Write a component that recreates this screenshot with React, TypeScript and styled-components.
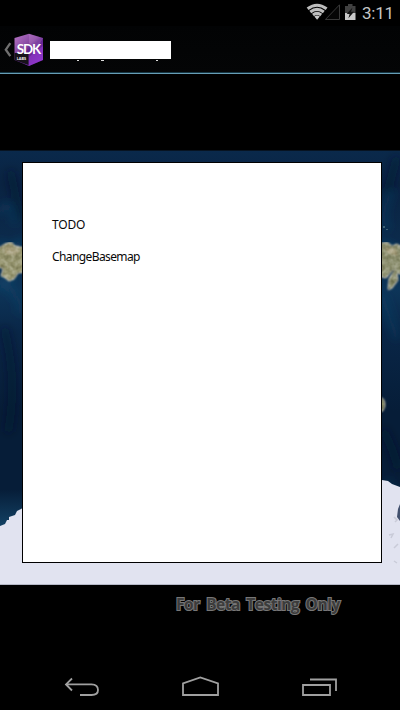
import React from "react";
import styled, { createGlobalStyle } from "styled-components";

const GlobalStyle = createGlobalStyle`
  * { box-sizing: border-box; }
  body { margin: 0; background: #000; overflow: hidden; }
`;

const Screen = styled.div`
  width: 400px;
  height: 710px;
  display: flex;
  flex-direction: column;
  background: #000;
  overflow: hidden;
  font-family: Roboto, sans-serif;
`;

const StatusBar = styled.header`
  height: 26px;
  flex: none;
  display: flex;
  align-items: flex-start;
  justify-content: flex-end;
  padding-right: 7px;
`;

const StatusIcons = styled.svg`
  display: block;
  width: 54px;
  height: 26px;
  margin-right: 3px;
`;

const Clock = styled.time`
  width: 31px;
  padding-top: 3px;
  font-size: 17px;
  line-height: 21px;
  letter-spacing: -0.25px;
  white-space: nowrap;
  color: #c6c6c6;
`;

const ActionBar = styled.div`
  height: 48px;
  flex: none;
  display: flex;
  background: linear-gradient(#020304, #040506);
  box-shadow: inset 0 -1px #679db5, inset 0 -2px #153644;
`;

const BrandIcon = styled.svg`
  display: block;
  width: 46px;
  height: 46px;
`;

const LogoText = styled.text`
  font-family: Lato, sans-serif;
  fill: #fff;
`;

const RedactedTitle = styled.div`
  width: 121px;
  height: 18px;
  margin: 15px 0 0 4px;
  background: #fff;
`;

const TitleTails = styled.svg`
  display: block;
  width: 121px;
  height: 2px;
  margin-top: 19px;
`;

const MapView = styled.main`
  height: 435px;
  flex: none;
  margin-top: 76px;
  display: grid;
`;

const Basemap = styled.svg`
  grid-area: 1 / 1;
  display: block;
  width: 400px;
  height: 435px;
`;

const Dialog = styled.section`
  grid-area: 1 / 1;
  z-index: 1;
  width: 360px;
  height: 401px;
  margin: 12px 0 0 22px;
  padding: 54px 0 0 29px;
  background: #fff;
  border: 1px solid #000;
  font: 12px/16px "Noto Sans", sans-serif;
  color: #080808;
`;

const DialogLine = styled.p<{ $spacing: number }>`
  width: max-content;
  margin: 0 0 16px;
  letter-spacing: ${(p) => p.$spacing}px;
`;

const Watermark = styled.div`
  margin: 9px 0 0 176px;
  height: 20px;
  font: 700 15.5px/20px "Open Sans", sans-serif;
  letter-spacing: -0.5px;
  word-spacing: 3px;
  white-space: nowrap;
  color: #3c3c3c;
  -webkit-text-stroke: 2px #777;
  paint-order: stroke fill;
`;

const NavBar = styled.nav`
  height: 48px;
  flex: none;
  margin-top: auto;
  display: flex;
  padding-left: 23px;
`;

const NavButton = styled.button`
  width: 119px;
  height: 48px;
  padding: 0;
  border: 0;
  background: none;
`;

const NavIcon = styled.svg`
  display: block;
  width: 119px;
  height: 48px;
  fill: none;
  stroke: #a0a0a0;
  stroke-width: 1.8;
`;

export default function App() {
  return (
    <Screen>
      <GlobalStyle />
      <StatusBar>
        <StatusIcons viewBox="305 0 54 26">
          <g fill="none" stroke="#bdbdbd" strokeWidth="3">
            <path d="M307.6 8.8 Q317 1.6 326.6 8.8" />
            <path d="M310.3 12 Q317 6.8 323.8 12" />
            <path d="M313 15 Q317 11.8 321.2 15" />
          </g>
          <path d="M314.4 16.6 Q317 14.6 319.8 16.6 L317.1 19.8Z" fill="#c8c8c8" />
          <path d="M339.5 4.8 V19.5 H325.4Z" fill="#050505" stroke="#393939" />
          <path d="M345 6 H348 V4 H352.5 V6 H355.5 V13 H345Z" fill="#414141" />
          <path d="M345 13 H355.5 V20 H345Z" fill="#c9c9c9" />
          <path d="M352.5 7.5 L346.7 14 H349.6 L348.4 18.3 L354 11.8 H351Z" fill="#111" />
        </StatusIcons>
        <Clock>3:11</Clock>
      </StatusBar>
      <ActionBar>
        <BrandIcon viewBox="0 26 46 46">
          <defs>
            <linearGradient id="cube" x1="0" y1="0" x2="0.8" y2="1">
              <stop offset="0" stopColor="#b978c8" />
              <stop offset="0.45" stopColor="#82449e" />
              <stop offset="0.55" stopColor="#60238b" />
              <stop offset="1" stopColor="#8430c2" />
            </linearGradient>
          </defs>
          <path d="M10.3 43.2 L5.8 49.7 L10.3 56.2" fill="none" stroke="#707070" strokeWidth="2.3" />
          <path d="M14.5 38 L29 33.8 L43 38 V60 L29 66 L14.5 60Z" fill="url(#cube)" />
          <path d="M29 34 L43 38 L37 49 L29 43Z" fill="#d99adf" opacity="0.25" />
          <path d="M29 57 L43 46 V60 L29 66Z" fill="#a342df" opacity="0.4" />
          <path d="M14.5 53 H28.5 V65 L14.5 60Z" fill="#17131a" />
          <LogoText x="16.8" y="53.7" fontSize="13.3" fontWeight="700" letterSpacing="-1.1">SDK</LogoText>
          <LogoText x="16.8" y="60.3" fontSize="3.8" fontWeight="700">LABS</LogoText>
        </BrandIcon>
        <RedactedTitle>
          <TitleTails viewBox="0 0 121 2">
            <path d="M27 0.5 H29 M51 0.5 H54 M106 0.5 H108" stroke="#ddd" strokeWidth="1" />
          </TitleTails>
        </RedactedTitle>
      </ActionBar>
      <MapView>
        <Basemap viewBox="0 150 400 435">
          <defs>
            <linearGradient id="ocean" x1="0" y1="0" x2="0" y2="1">
              <stop offset="0" stopColor="#0a294b" />
              <stop offset="0.08" stopColor="#092342" />
              <stop offset="0.2" stopColor="#0b2a4b" />
              <stop offset="0.32" stopColor="#0d3559" />
              <stop offset="0.42" stopColor="#092647" />
              <stop offset="0.6" stopColor="#061d38" />
              <stop offset="0.78" stopColor="#061d38" />
              <stop offset="0.86" stopColor="#123f61" />
            </linearGradient>
            <filter id="haze" x="-50%" y="-50%" width="200%" height="200%">
              <feGaussianBlur stdDeviation="4" />
            </filter>
            <filter id="terrain" x="0" y="0" width="100%" height="100%">
              <feTurbulence type="fractalNoise" baseFrequency="0.2" numOctaves="2" seed="5" result="noise" />
              <feColorMatrix in="noise" type="matrix" values="0.7 0 0 0 0.18  0.7 0 0 0 0.18  0.7 0 0 0 0.18  0 0 0 0 1" result="grey" />
              <feGaussianBlur in="SourceGraphic" stdDeviation="0.9" result="soft" />
              <feComposite in="grey" in2="soft" operator="in" result="grain" />
              <feBlend in="grain" in2="soft" mode="soft-light" />
            </filter>
          </defs>
          <rect y="150" width="400" height="435" fill="url(#ocean)" />
          <g filter="url(#haze)" fill="none">
            <path d="M-3 214 Q11 194 15 224 M-4 280 Q24 296 20 314 M392 190 Q378 219 389 229 M382 295 L397 339 M387 480 Q395 500 405 490" stroke="#155078" strokeWidth="7" opacity="0.3" />
            <path d="M10 171 Q14 185 20 220 M4 328 Q18 379 8 432 M397 157 L387 193 M383 430 Q394 450 398 469" stroke="#03142c" strokeWidth="8" opacity="0.5" />
            <path d="M0 242 Q8 254 24 240 M0 286 L14 276 M380 242 L401 254" stroke="#16537a" strokeWidth="6" opacity="0.5" />
          </g>
          <g filter="url(#terrain)">
            <path d="M-3 249 L5 244 L11 242 L15 246 L26 248 V272 L18 273 L14 279 L9 281 L4 277 L1 276 L3 269 L-3 266Z" fill="#93926c" />
            <path d="M378 244 L387 242 L392 246 L397 244 L404 248 V275 L397 273 L398 280 L392 288 L388 290 L389 279 L395 269 L391 272 L386 278 L378 276Z" fill="#888b6a" />
            <path d="M3 249 L10 245 L14 249 L21 250 L15 255 L6 254Z M384 247 L396 249 L398 256 L388 253Z" fill="#a69e7c" />
            <path d="M379 397 Q385 398 385 405 Q385 410 379 413Z" fill="#6f754f" />
          </g>
          <path d="M383 226 H385 V228 H383Z M386 229 H388 V230 H386Z" fill="#3f6274" />
          <path d="M0 526 L5 524 L7 520 H9 V517 L15 515 L17 511 L21 509 L35 500 H340 L382 480 L388 481 L392 484 L400 487 V585 H0Z" fill="#e1e3f0" />
          <path d="M400 504 L398 509 L397 517 L400 521Z" fill="#42516e" />
          <path d="M394 517 L397 520 L395 522 M389 535 L393 534 L391 538 M394 548 L398 544 M394 561 L397 563" fill="none" stroke="#c9cbd8" strokeWidth="1.5" />
          <path d="M0 150.5 H400" stroke="#071321" />
          <path d="M0 584.5 H400" stroke="#b5b8c7" />
        </Basemap>
        <Dialog>
          <DialogLine $spacing={-0.15}>TODO</DialogLine>
          <DialogLine $spacing={-0.6}>ChangeBasemap</DialogLine>
        </Dialog>
      </MapView>
      <Watermark>For Beta Testing Only</Watermark>
      <NavBar>
        <NavButton aria-label="Back">
          <NavIcon viewBox="23 662 119 48">
            <path d="M72 678.5 L66 684.4 L72 690.5 M66 684.4 H91.5 C96 684.4 98 687 98 690 S95.5 695 91.5 695 H80" />
          </NavIcon>
        </NavButton>
        <NavButton aria-label="Home">
          <NavIcon viewBox="142 662 119 48">
            <path d="M183 695 V683.5 L200.3 677.5 L218 683.5 V695Z" />
          </NavIcon>
        </NavButton>
        <NavButton aria-label="Recent apps">
          <NavIcon viewBox="261 662 119 48">
            <path d="M303 685 H330 V695 H303Z M310 679.5 H336 V691" />
          </NavIcon>
        </NavButton>
      </NavBar>
    </Screen>
  );
}
